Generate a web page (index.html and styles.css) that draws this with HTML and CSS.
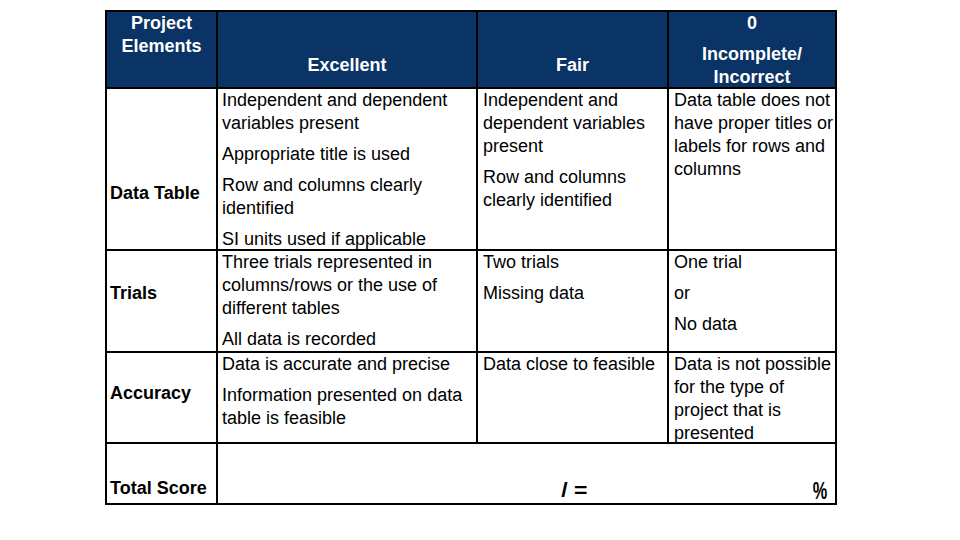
FILE: index.html
```html
<!DOCTYPE html>
<html>
<head>
<meta charset="utf-8">
<link rel="stylesheet" href="styles.css">
</head>
<body>
<div class="rubric">
  <div class="cell head h-first"><p>Project Elements</p></div>
  <div class="cell head h-low"><p>Excellent</p></div>
  <div class="cell head h-low"><p>Fair</p></div>
  <div class="cell head h-last"><p>0</p><p>Incomplete/ Incorrect</p></div>

  <div class="cell label lab-dt">Data Table</div>
  <div class="cell c2">
    <p>Independent and dependent variables present</p>
    <p>Appropriate title is used</p>
    <p>Row and columns clearly identified</p>
    <p>SI units used if applicable</p>
  </div>
  <div class="cell c3">
    <p>Independent and dependent variables present</p>
    <p>Row and columns clearly identified</p>
  </div>
  <div class="cell c4">
    <p>Data table does not have proper titles or labels for rows and columns</p>
  </div>

  <div class="cell label lab-tr">Trials</div>
  <div class="cell c2">
    <p>Three trials represented in columns/rows or the use of different tables</p>
    <p>All data is recorded</p>
  </div>
  <div class="cell c3">
    <p>Two trials</p>
    <p>Missing data</p>
  </div>
  <div class="cell c4">
    <p>One trial</p>
    <p>or</p>
    <p>No data</p>
  </div>

  <div class="cell label lab-ac">Accuracy</div>
  <div class="cell c2">
    <p>Data is accurate and precise</p>
    <p>Information presented on data table is feasible</p>
  </div>
  <div class="cell c3">
    <p>Data close to feasible</p>
  </div>
  <div class="cell c4">
    <p>Data is not possible for the type of project that is presented</p>
  </div>

  <div class="cell label lab-to">Total Score</div>
  <div class="cell total">
    <span class="t-blank"></span>
    <span class="t-eq"><span class="glyph">/ =</span></span>
    <span class="t-pct"><span class="glyph pct">%</span></span>
  </div>
</div>
</body>
</html>
```

FILE: styles.css
```css
html, body {
  margin: 0;
  padding: 0;
  background: #ffffff;
}

body {
  font-family: "Liberation Sans", Arial, sans-serif;
  font-size: 18px;
  line-height: 23px;
  color: #000000;
}

.rubric {
  margin: 10px 0 0 105px;
  width: 732px;
  box-sizing: border-box;
  display: grid;
  grid-template-columns: 109px 258px 189px 166px;
  grid-template-rows: 75px 160px 100px 89px 59px;
  gap: 2px;
  padding: 2px;
  background: #000000;
}

.cell {
  background: #ffffff;
  overflow: visible;
  box-sizing: border-box;
}

.cell p {
  margin: 0 0 8px 0;
}

.cell p:last-child {
  margin-bottom: 0;
}

.head {
  background: #093465;
  color: #ffffff;
  font-weight: bold;
  text-align: center;
}

.h-first {
  padding: 0 2px;
}

.h-low {
  padding-top: 42px;
}

.h-last {
  padding-top: 0;
}

.label {
  font-weight: bold;
  padding-left: 3px;
}

.lab-dt { padding-top: 93px; }
.lab-tr { padding-top: 31px; }
.lab-ac { padding-top: 29px; }
.lab-to { padding-top: 33px; }

.c2 {
  padding: 0 2px 0 4px;
}

.c3 {
  padding: 0 2px 0 5px;
}

.c4 {
  padding: 0 0 0 5px;
}

.total {
  grid-column: 2 / 5;
  display: grid;
  grid-template-columns: 259px 191px 167px;
  align-items: start;
  padding-top: 35px;
  font-weight: bold;
}

.t-eq {
  text-align: center;
  padding-left: 3px;
}

.t-pct {
  text-align: right;
  padding-right: 8px;
}

.glyph {
  display: inline-block;
  font-size: 20px;
  transform: scaleX(1.15);
}

.pct {
  font-size: 24px;
  transform: scaleX(0.68);
  transform-origin: right center;
}
```
